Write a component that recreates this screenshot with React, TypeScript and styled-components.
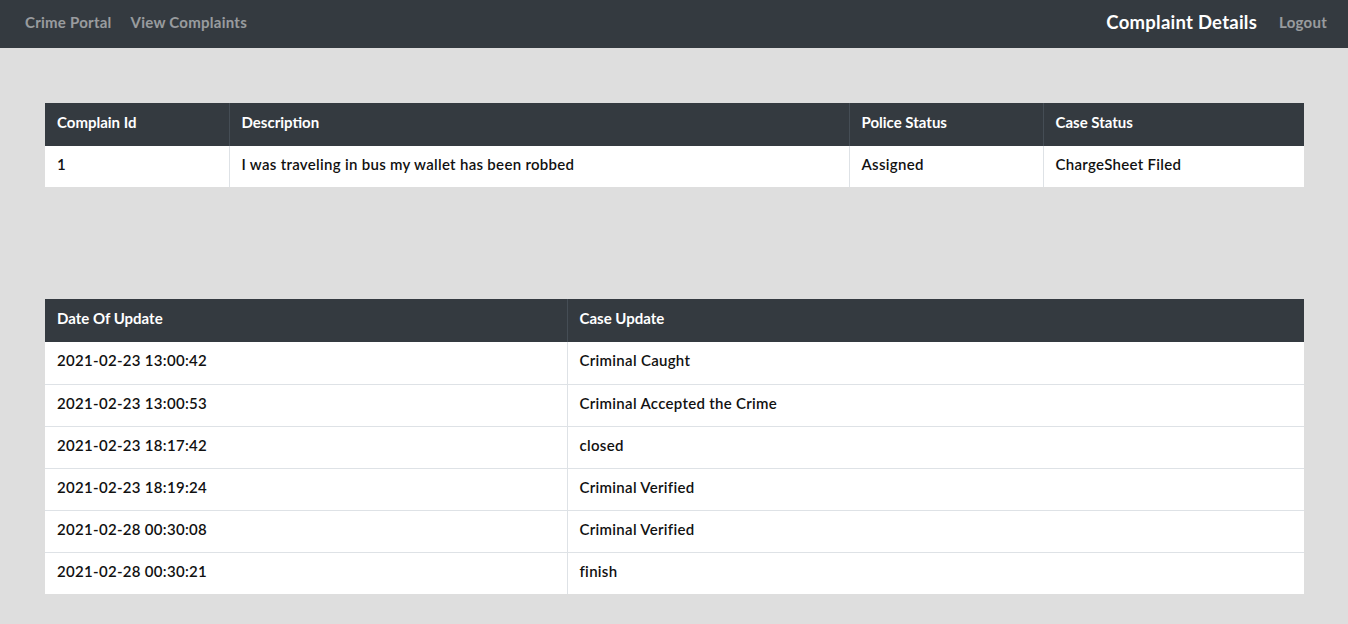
import React from "react";
import styled, { createGlobalStyle } from "styled-components";

const Global = createGlobalStyle`
  html, body { margin: 0; padding: 0; }
  body {
    background: #dedede;
    font-family: "Lato", "Open Sans", sans-serif;
    color: #111;
  }
`;

const Nav = styled.nav`
  height: 48px;
  background: #343a40;
  display: flex;
  align-items: center;
  justify-content: space-between;
  padding: 0 21px 4px 25px;
  box-sizing: border-box;
`;

const NavGroup = styled.div<{ $gap: number }>`
  display: flex;
  align-items: center;
  gap: ${(p) => p.$gap}px;
`;

const NavLink = styled.a<{ $active?: boolean }>`
  color: ${(p) => (p.$active ? "#ffffff" : "rgba(255,255,255,0.5)")};
  font-size: ${(p) => (p.$active ? "18.5px" : "15px")};
  font-weight: 700;
  letter-spacing: 0.25px;
  text-decoration: none;
  white-space: nowrap;
`;

const Main = styled.main`
  padding: 55px 44px 30px 45px;
  display: flex;
  flex-direction: column;
  gap: 112px;
`;

const Table = styled.table`
  width: 100%;
  border-collapse: collapse;
  background: #fff;
  table-layout: fixed;
  font-size: 15px;
`;

const Th = styled.th<{ $w?: number }>`
  width: ${(p) => (p.$w ? `${p.$w}px` : "auto")};
  background: #343a40;
  color: #fff;
  text-align: left;
  font-weight: 700;
  height: 43px;
  padding: 0 12px 5px;
  box-sizing: border-box;
  border-left: 1px solid #454d55;
  &:first-child { border-left: none; }
`;

const Td = styled.td`
  padding: 0 12px 5px;
  box-sizing: border-box;
  font-weight: 600;
  letter-spacing: 0.3px;
  color: #111;
  border-left: 1px solid #dee2e6;
  border-top: 1px solid #dee2e6;
  &:first-child { border-left: none; }
`;

const Tr = styled.tr<{ $h: number }>`
  height: ${(p) => p.$h}px;
  &:first-child td { border-top: none; }
`;

const updates = [
  ["2021-02-23 13:00:42", "Criminal Caught"],
  ["2021-02-23 13:00:53", "Criminal Accepted the Crime"],
  ["2021-02-23 18:17:42", "closed"],
  ["2021-02-23 18:19:24", "Criminal Verified"],
  ["2021-02-28 00:30:08", "Criminal Verified"],
  ["2021-02-28 00:30:21", "finish"],
];

export default function App() {
  return (
    <>
      <Global />
      <Nav>
        <NavGroup $gap={19}>
          <NavLink>Crime Portal</NavLink>
          <NavLink>View Complaints</NavLink>
        </NavGroup>
        <NavGroup $gap={22}>
          <NavLink $active>Complaint Details</NavLink>
          <NavLink>Logout</NavLink>
        </NavGroup>
      </Nav>
      <Main>
        <Table>
          <thead>
            <tr>
              <Th $w={184}>Complain Id</Th>
              <Th $w={620}>Description</Th>
              <Th $w={194}>Police Status</Th>
              <Th>Case Status</Th>
            </tr>
          </thead>
          <tbody>
            <Tr $h={41}>
              <Td>1</Td>
              <Td>I was traveling in bus my wallet has been robbed</Td>
              <Td>Assigned</Td>
              <Td>ChargeSheet Filed</Td>
            </Tr>
          </tbody>
        </Table>
        <Table>
          <thead>
            <tr>
              <Th $w={522}>Date Of Update</Th>
              <Th>Case Update</Th>
            </tr>
          </thead>
          <tbody>
            {updates.map(([d, u], i) => (
              <Tr $h={42} key={i}>
                <Td>{d}</Td>
                <Td>{u}</Td>
              </Tr>
            ))}
          </tbody>
        </Table>
      </Main>
    </>
  );
}
